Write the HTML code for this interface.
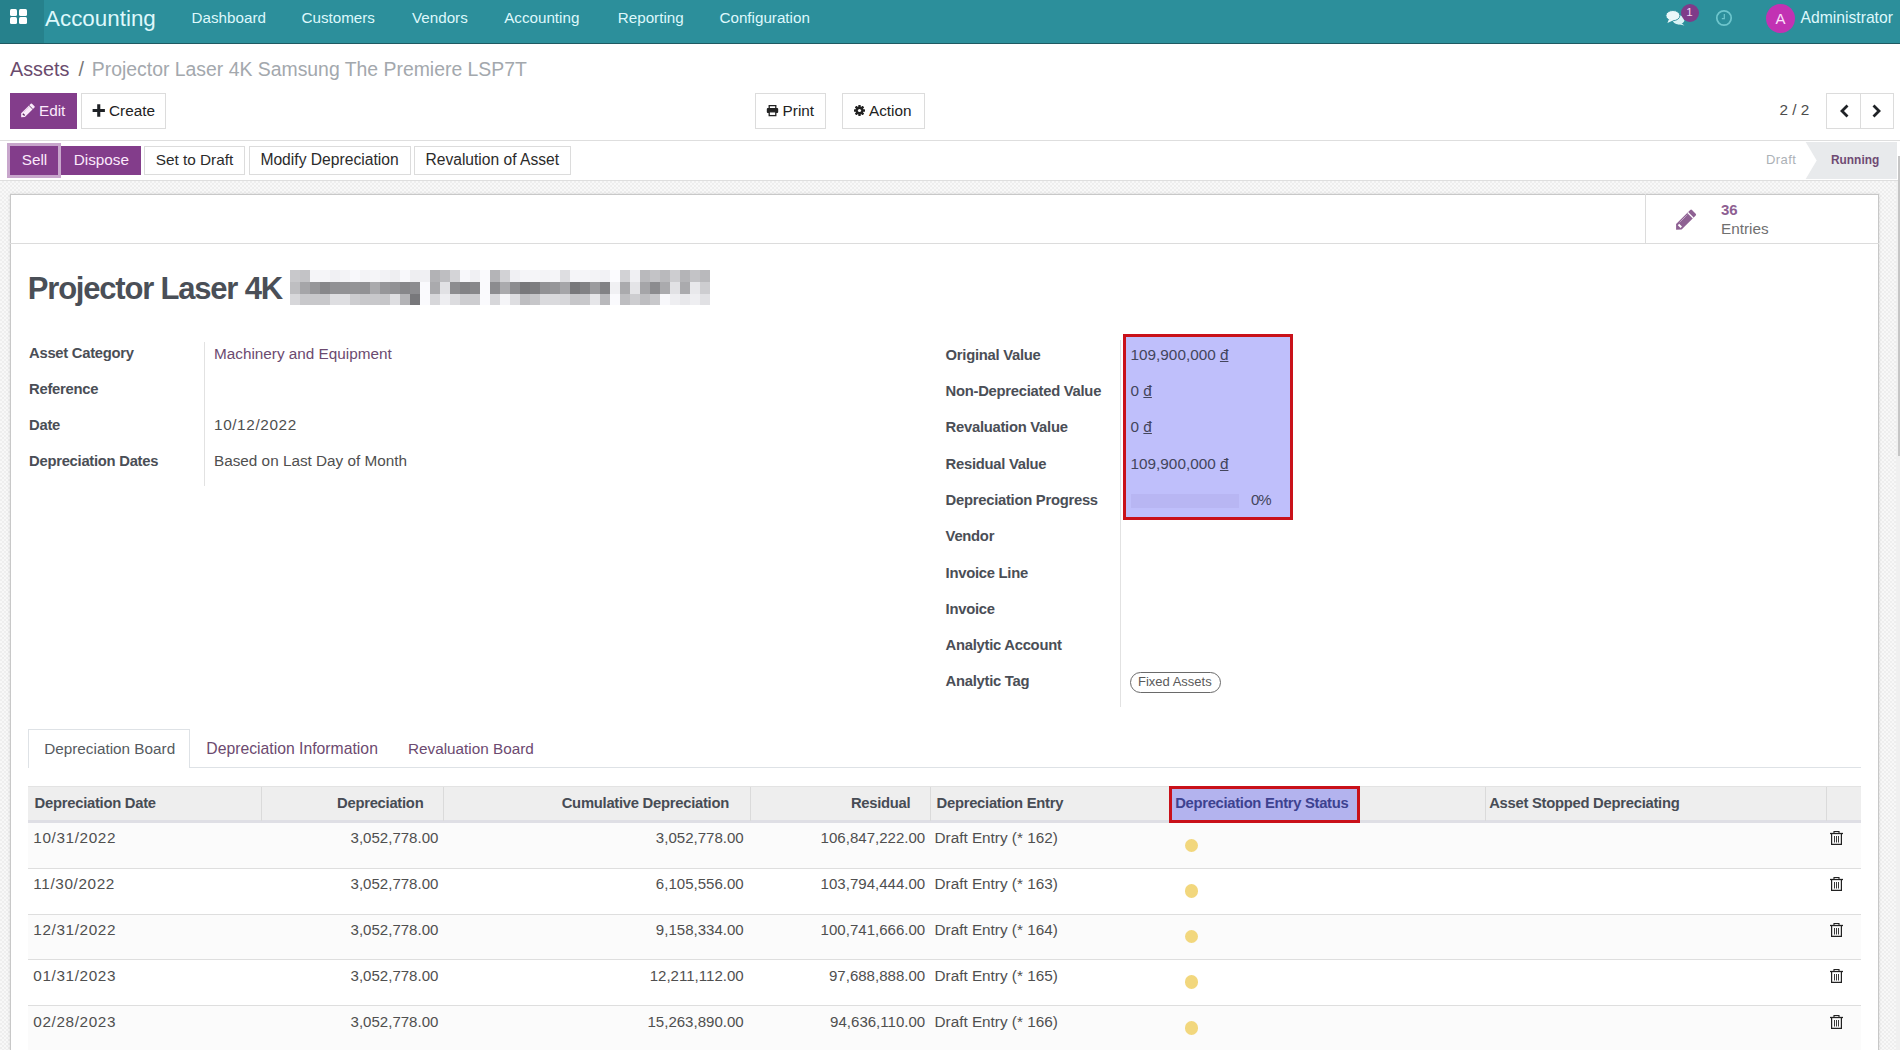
<!DOCTYPE html><html><head><meta charset="utf-8"><style>
html,body{margin:0;padding:0;width:1900px;height:1050px;overflow:hidden;background:#fff;font-family:"Liberation Sans",sans-serif;}
.t{position:absolute;white-space:pre;line-height:1;}
.r{position:absolute;box-sizing:border-box;}
svg{position:absolute;}
</style></head><body>

<div class="r" style="left:0px;top:181px;width:1900px;height:869px;background-color:#f3f3f3;background-image:repeating-conic-gradient(#eeeeee 0 25%, #f8f8f8 0 50%);background-size:4px 4px;"></div>
<div class="r" style="left:10px;top:194px;width:1869px;height:866px;background:#fff;border:1px solid #c8c8c8;box-shadow:0 0 3px rgba(0,0,0,0.12);"></div>
<div class="r" style="left:1896px;top:181px;width:4px;height:869px;background:#f0f0f0;"></div>
<div class="r" style="left:0px;top:0px;width:1900px;height:43px;background:#2c8f9b;"></div>
<div class="r" style="left:0px;top:0px;width:44px;height:43px;background:#26818c;"></div>
<div class="r" style="left:0px;top:43px;width:1900px;height:1px;background:#1f5a62;"></div>
<div class="r" style="left:9.5px;top:9px;width:7.5px;height:6.5px;background:#fff;border-radius:1.5px;"></div>
<div class="r" style="left:19px;top:9px;width:7.5px;height:6.5px;background:#fff;border-radius:1.5px;"></div>
<div class="r" style="left:9.5px;top:17px;width:7.5px;height:6.5px;background:#fff;border-radius:1.5px;"></div>
<div class="r" style="left:19px;top:17px;width:7.5px;height:6.5px;background:#fff;border-radius:1.5px;"></div>
<div class="t" style="top:8px;font-size:22.4px;font-weight:400;color:#def8fb;left:45px;">Accounting</div>
<div class="t" style="top:10px;font-size:15.2px;font-weight:400;color:#def8fb;left:191.6px;">Dashboard</div>
<div class="t" style="top:10px;font-size:15.2px;font-weight:400;color:#def8fb;left:301.5px;">Customers</div>
<div class="t" style="top:10px;font-size:15.2px;font-weight:400;color:#def8fb;left:412px;">Vendors</div>
<div class="t" style="top:10px;font-size:15.2px;font-weight:400;color:#def8fb;left:504.2px;">Accounting</div>
<div class="t" style="top:10px;font-size:15.2px;font-weight:400;color:#def8fb;left:617.8px;">Reporting</div>
<div class="t" style="top:10px;font-size:15.2px;font-weight:400;color:#def8fb;left:719.5px;">Configuration</div>
<svg style="left:1664px;top:8px" width="24" height="20" viewBox="0 0 24 20">
<ellipse cx="14.5" cy="11.8" rx="6" ry="4.6" fill="#d8f3f5"/>
<path d="M16.5 14.5 L20.4 17.4 L12.5 15.8 Z" fill="#d8f3f5"/>
<ellipse cx="8.9" cy="7.6" rx="7" ry="5.1" fill="#eaf8f9" stroke="#2c8f9b" stroke-width="0.9"/>
<path d="M5 11 L3.4 15 L9.5 12.3 Z" fill="#eaf8f9"/>
</svg>
<div class="r" style="left:1680.5px;top:4px;width:18.0px;height:18px;background:#7f3b89;border-radius:50%;"></div>
<div class="t" style="top:7px;font-size:11.5px;font-weight:400;color:#f5d8f3;left:1489.5px;width:400px;text-align:center;">1</div>
<svg style="left:1715px;top:9px" width="18" height="18" viewBox="0 0 18 18">
<circle cx="9" cy="9" r="7.2" fill="none" stroke="#6ec6cd" stroke-width="1.7"/>
<path d="M9.3 5 V9.6 H6.8" fill="none" stroke="#6ec6cd" stroke-width="1.2"/>
</svg>
<div class="r" style="left:1765.7px;top:3.8px;width:29.0px;height:28.999999999999996px;background:#c232b3;border-radius:50%;"></div>
<div class="t" style="top:11px;font-size:15px;font-weight:400;color:#fbe0fb;left:1580.5px;width:400px;text-align:center;">A</div>
<div class="t" style="top:10px;font-size:15.7px;font-weight:400;color:#def8fb;left:1800.5px;">Administrator</div>
<div class="t" style="top:60px;font-size:19.8px;font-weight:400;color:#6a4b6d;left:10px;">Assets</div>
<div class="t" style="top:60px;font-size:19.8px;font-weight:400;color:#777;left:78.5px;">/</div>
<div class="t" style="top:60px;font-size:19.4px;font-weight:400;color:#a3a8ad;left:91.8px;">Projector Laser 4K Samsung The Premiere LSP7T</div>
<div class="r" style="left:10px;top:93px;width:67px;height:36px;background:#833d8b;"></div>
<svg style="left:16.95px;top:98.8px" width="21.8" height="21.8" viewBox="0 0 32 32">
<path d="M6.1 26.8 L6.1 21.1 L20.2 7 Q21.1 6.1 22 7 L25.7 10.7 Q26.6 11.6 25.7 12.5 L11.6 26.6 Z" fill="#fbe9fb"/>
<path d="M17.7 9.5 L23.2 15" stroke="#5a2d60" stroke-width="1.3"/>
<path d="M9.8 19.2 L17.2 11.8" stroke="#b48fb8" stroke-width="0.9" stroke-dasharray="1 0.6"/>
<path d="M8.5 21.5 L11.25 24.25" stroke="#5a2d60" stroke-width="2"/>
</svg>
<div class="t" style="top:103px;font-size:15.3px;font-weight:400;color:#fbe9fb;left:39px;">Edit</div>
<div class="r" style="left:81px;top:93px;width:85px;height:36px;background:#fff;border:1px solid #dcdcdc;"></div>
<svg style="left:92px;top:103.5px" width="13" height="13" viewBox="0 0 13 13">
<path d="M6.75 0.3 V12.7 M0.6 6.5 H12.9" stroke="#1f2226" stroke-width="3.1"/>
</svg>
<div class="t" style="top:103px;font-size:15.3px;font-weight:400;color:#222;left:109px;">Create</div>
<div class="r" style="left:755px;top:93px;width:71px;height:36px;background:#fff;border:1px solid #dcdcdc;"></div>
<svg style="left:766px;top:104px" width="13" height="13" viewBox="0 0 13 13">
<path d="M3.2 4 V1.6 H9.8 V4" fill="none" stroke="#222" stroke-width="1.3"/>
<rect x="0.8" y="4" width="11.4" height="5" rx="1" fill="#222"/>
<rect x="3.2" y="7.8" width="6.6" height="3.8" fill="#fff" stroke="#222" stroke-width="1.3"/>
</svg>
<div class="t" style="top:103px;font-size:15.3px;font-weight:400;color:#222;left:782.6px;">Print</div>
<div class="r" style="left:842px;top:93px;width:83px;height:36px;background:#fff;border:1px solid #dcdcdc;"></div>
<svg style="left:854px;top:104.5px" width="12" height="12" viewBox="0 0 12 12">
<g fill="#222" transform="translate(5.5 5.5)">
<circle r="3.9"/>
<rect x="-1.2" y="-5.5" width="2.4" height="11" rx="0.5"/>
<rect x="-1.2" y="-5.5" width="2.4" height="11" rx="0.5" transform="rotate(45)"/>
<rect x="-1.2" y="-5.5" width="2.4" height="11" rx="0.5" transform="rotate(90)"/>
<rect x="-1.2" y="-5.5" width="2.4" height="11" rx="0.5" transform="rotate(135)"/>
</g>
<circle cx="5.5" cy="5.5" r="1.6" fill="#fff"/>
</svg>
<div class="t" style="top:103px;font-size:15.3px;font-weight:400;color:#222;left:869px;">Action</div>
<div class="t" style="top:102px;font-size:15.3px;font-weight:400;color:#4c4c4c;left:1779.5px;">2 / 2</div>
<div class="r" style="left:1826px;top:93px;width:68px;height:36px;background:#fff;border:1px solid #dcdcdc;"></div>
<div class="r" style="left:1860px;top:93px;width:1px;height:36px;background:#dcdcdc;"></div>
<svg style="left:1837.5px;top:103px" width="14" height="16" viewBox="0 0 14 16">
<path d="M9.5 2.5 L4 8 L9.5 13.5" fill="none" stroke="#1f2226" stroke-width="2.8" stroke-linejoin="miter"/>
</svg>
<svg style="left:1869px;top:103px" width="14" height="16" viewBox="0 0 14 16">
<path d="M4.5 2.5 L10 8 L4.5 13.5" fill="none" stroke="#1f2226" stroke-width="2.8" stroke-linejoin="miter"/>
</svg>
<div class="r" style="left:0px;top:140px;width:1900px;height:1px;background:#dedede;"></div>
<div class="r" style="left:7px;top:143px;width:54px;height:35px;background:#c8a6cc;"></div>
<div class="r" style="left:10px;top:146px;width:48px;height:29px;background:#833d8b;"></div>
<div class="r" style="left:61px;top:146px;width:80px;height:29px;background:#833d8b;"></div>
<div class="t" style="top:152px;font-size:15.3px;font-weight:400;color:#fbe9fb;left:21.7px;">Sell</div>
<div class="t" style="top:152px;font-size:15.3px;font-weight:400;color:#fbe9fb;left:73.7px;">Dispose</div>
<div class="r" style="left:144px;top:146px;width:101px;height:29px;background:#fff;border:1px solid #dcdcdc;"></div>
<div class="t" style="top:152px;font-size:15.35px;font-weight:400;color:#2b2b2b;left:155.7px;">Set to Draft</div>
<div class="r" style="left:249px;top:146px;width:162px;height:29px;background:#fff;border:1px solid #dcdcdc;"></div>
<div class="t" style="top:152px;font-size:15.65px;font-weight:400;color:#2b2b2b;left:260.4px;">Modify Depreciation</div>
<div class="r" style="left:414px;top:146px;width:157px;height:29px;background:#fff;border:1px solid #dcdcdc;"></div>
<div class="t" style="top:152px;font-size:15.6px;font-weight:400;color:#2b2b2b;left:425.5px;">Revalution of Asset</div>
<div class="t" style="top:153px;font-size:13px;font-weight:400;color:#acb1b6;letter-spacing:0.45px;left:1766px;">Draft</div>
<svg style="left:1805px;top:142px" width="92" height="37" viewBox="0 0 92 37">
<path d="M0.7 0 H92 V37 H0.7 L11.7 18.5 Z" fill="#e8eaec"/>
</svg>
<div class="t" style="top:155px;font-size:11.9px;font-weight:700;color:#6f4a73;left:1831px;">Running</div>
<div class="r" style="left:0px;top:180px;width:1900px;height:1px;background:#dedede;"></div>
<div class="r" style="left:10px;top:243px;width:1869px;height:1px;background:#dcdcdc;"></div>
<div class="r" style="left:1645px;top:194px;width:1px;height:49px;background:#dcdcdc;"></div>
<svg style="left:1670px;top:203px" width="32.0" height="32.0" viewBox="0 0 32 32">
<path d="M6.1 26.8 L6.1 21.1 L20.2 7 Q21.1 6.1 22 7 L25.7 10.7 Q26.6 11.6 25.7 12.5 L11.6 26.6 Z" fill="#8e6193"/>
<path d="M17.7 9.5 L23.2 15" stroke="#ffffff" stroke-width="1.3"/>
<path d="M9.8 19.2 L17.2 11.8" stroke="#e3cfe6" stroke-width="0.9" stroke-dasharray="1 0.6"/>
<path d="M8.5 21.5 L11.25 24.25" stroke="#ffffff" stroke-width="2"/>
</svg>
<div class="t" style="top:202px;font-size:15px;font-weight:700;color:#8e5f92;left:1721px;">36</div>
<div class="t" style="top:221px;font-size:15.3px;font-weight:400;color:#707070;left:1721px;">Entries</div>
<div class="t" style="top:273px;font-size:31px;font-weight:700;color:#4a4f57;letter-spacing:-1.2px;left:27.8px;">Projector Laser 4K</div>
<svg style="left:290px;top:270px" width="420" height="35" shape-rendering="crispEdges"><rect x="0" y="0" width="10" height="12" fill="rgb(200,200,203)"/><rect x="10" y="0" width="10" height="12" fill="rgb(195,195,198)"/><rect x="20" y="0" width="10" height="12" fill="rgb(245,245,248)"/><rect x="30" y="0" width="10" height="12" fill="rgb(245,245,248)"/><rect x="40" y="0" width="10" height="12" fill="rgb(240,240,243)"/><rect x="50" y="0" width="10" height="12" fill="rgb(243,243,246)"/><rect x="60" y="0" width="10" height="12" fill="rgb(248,248,251)"/><rect x="70" y="0" width="10" height="12" fill="rgb(243,243,246)"/><rect x="80" y="0" width="10" height="12" fill="rgb(245,245,248)"/><rect x="90" y="0" width="10" height="12" fill="rgb(242,242,245)"/><rect x="100" y="0" width="10" height="12" fill="rgb(238,238,241)"/><rect x="110" y="0" width="10" height="12" fill="rgb(248,248,251)"/><rect x="120" y="0" width="10" height="12" fill="rgb(238,238,241)"/><rect x="130" y="0" width="10" height="12" fill="rgb(240,240,243)"/><rect x="140" y="0" width="10" height="12" fill="rgb(178,178,181)"/><rect x="150" y="0" width="10" height="12" fill="rgb(190,190,193)"/><rect x="160" y="0" width="10" height="12" fill="rgb(212,212,215)"/><rect x="170" y="0" width="10" height="12" fill="rgb(248,248,251)"/><rect x="180" y="0" width="10" height="12" fill="rgb(240,240,243)"/><rect x="190" y="0" width="10" height="12" fill="rgb(250,250,253)"/><rect x="200" y="0" width="10" height="12" fill="rgb(180,180,183)"/><rect x="210" y="0" width="10" height="12" fill="rgb(210,210,213)"/><rect x="220" y="0" width="10" height="12" fill="rgb(240,240,243)"/><rect x="230" y="0" width="10" height="12" fill="rgb(245,245,248)"/><rect x="240" y="0" width="10" height="12" fill="rgb(245,245,248)"/><rect x="250" y="0" width="10" height="12" fill="rgb(243,243,246)"/><rect x="260" y="0" width="10" height="12" fill="rgb(245,245,248)"/><rect x="270" y="0" width="10" height="12" fill="rgb(222,222,225)"/><rect x="280" y="0" width="10" height="12" fill="rgb(245,245,248)"/><rect x="290" y="0" width="10" height="12" fill="rgb(245,245,248)"/><rect x="300" y="0" width="10" height="12" fill="rgb(243,243,246)"/><rect x="310" y="0" width="10" height="12" fill="rgb(242,242,245)"/><rect x="320" y="0" width="10" height="12" fill="rgb(252,252,255)"/><rect x="330" y="0" width="10" height="12" fill="rgb(210,210,213)"/><rect x="340" y="0" width="10" height="12" fill="rgb(240,240,243)"/><rect x="350" y="0" width="10" height="12" fill="rgb(185,185,188)"/><rect x="360" y="0" width="10" height="12" fill="rgb(195,195,198)"/><rect x="370" y="0" width="10" height="12" fill="rgb(185,185,188)"/><rect x="380" y="0" width="10" height="12" fill="rgb(205,205,208)"/><rect x="390" y="0" width="10" height="12" fill="rgb(180,180,183)"/><rect x="400" y="0" width="10" height="12" fill="rgb(195,195,198)"/><rect x="410" y="0" width="10" height="12" fill="rgb(185,185,188)"/><rect x="0" y="12" width="10" height="12" fill="rgb(190,190,193)"/><rect x="10" y="12" width="10" height="12" fill="rgb(165,165,168)"/><rect x="20" y="12" width="10" height="12" fill="rgb(150,150,153)"/><rect x="30" y="12" width="10" height="12" fill="rgb(135,135,138)"/><rect x="40" y="12" width="10" height="12" fill="rgb(145,145,148)"/><rect x="50" y="12" width="10" height="12" fill="rgb(145,145,148)"/><rect x="60" y="12" width="10" height="12" fill="rgb(148,148,151)"/><rect x="70" y="12" width="10" height="12" fill="rgb(145,145,148)"/><rect x="80" y="12" width="10" height="12" fill="rgb(170,170,173)"/><rect x="90" y="12" width="10" height="12" fill="rgb(150,150,153)"/><rect x="100" y="12" width="10" height="12" fill="rgb(145,145,148)"/><rect x="110" y="12" width="10" height="12" fill="rgb(135,135,138)"/><rect x="120" y="12" width="10" height="12" fill="rgb(140,140,143)"/><rect x="130" y="12" width="10" height="12" fill="rgb(250,250,253)"/><rect x="140" y="12" width="10" height="12" fill="rgb(170,170,173)"/><rect x="150" y="12" width="10" height="12" fill="rgb(225,225,228)"/><rect x="160" y="12" width="10" height="12" fill="rgb(140,140,143)"/><rect x="170" y="12" width="10" height="12" fill="rgb(130,130,133)"/><rect x="180" y="12" width="10" height="12" fill="rgb(135,135,138)"/><rect x="190" y="12" width="10" height="12" fill="rgb(250,250,253)"/><rect x="200" y="12" width="10" height="12" fill="rgb(140,140,143)"/><rect x="210" y="12" width="10" height="12" fill="rgb(170,170,173)"/><rect x="220" y="12" width="10" height="12" fill="rgb(140,140,143)"/><rect x="230" y="12" width="10" height="12" fill="rgb(120,120,123)"/><rect x="240" y="12" width="10" height="12" fill="rgb(125,125,128)"/><rect x="250" y="12" width="10" height="12" fill="rgb(145,145,148)"/><rect x="260" y="12" width="10" height="12" fill="rgb(150,150,153)"/><rect x="270" y="12" width="10" height="12" fill="rgb(165,165,168)"/><rect x="280" y="12" width="10" height="12" fill="rgb(120,120,123)"/><rect x="290" y="12" width="10" height="12" fill="rgb(130,130,133)"/><rect x="300" y="12" width="10" height="12" fill="rgb(155,155,158)"/><rect x="310" y="12" width="10" height="12" fill="rgb(130,130,133)"/><rect x="320" y="12" width="10" height="12" fill="rgb(240,240,243)"/><rect x="330" y="12" width="10" height="12" fill="rgb(170,170,173)"/><rect x="340" y="12" width="10" height="12" fill="rgb(228,228,231)"/><rect x="350" y="12" width="10" height="12" fill="rgb(165,165,168)"/><rect x="360" y="12" width="10" height="12" fill="rgb(140,140,143)"/><rect x="370" y="12" width="10" height="12" fill="rgb(170,170,173)"/><rect x="380" y="12" width="10" height="12" fill="rgb(225,225,228)"/><rect x="390" y="12" width="10" height="12" fill="rgb(170,170,173)"/><rect x="400" y="12" width="10" height="12" fill="rgb(232,232,235)"/><rect x="410" y="12" width="10" height="12" fill="rgb(205,205,208)"/><rect x="0" y="24" width="10" height="11" fill="rgb(215,215,218)"/><rect x="10" y="24" width="10" height="11" fill="rgb(200,200,203)"/><rect x="20" y="24" width="10" height="11" fill="rgb(200,200,203)"/><rect x="30" y="24" width="10" height="11" fill="rgb(200,200,203)"/><rect x="40" y="24" width="10" height="11" fill="rgb(222,222,225)"/><rect x="50" y="24" width="10" height="11" fill="rgb(222,222,225)"/><rect x="60" y="24" width="10" height="11" fill="rgb(205,205,208)"/><rect x="70" y="24" width="10" height="11" fill="rgb(200,200,203)"/><rect x="80" y="24" width="10" height="11" fill="rgb(200,200,203)"/><rect x="90" y="24" width="10" height="11" fill="rgb(198,198,201)"/><rect x="100" y="24" width="10" height="11" fill="rgb(222,222,225)"/><rect x="110" y="24" width="10" height="11" fill="rgb(180,180,183)"/><rect x="120" y="24" width="10" height="11" fill="rgb(120,120,123)"/><rect x="130" y="24" width="10" height="11" fill="rgb(250,250,253)"/><rect x="140" y="24" width="10" height="11" fill="rgb(215,215,218)"/><rect x="150" y="24" width="10" height="11" fill="rgb(238,238,241)"/><rect x="160" y="24" width="10" height="11" fill="rgb(220,220,223)"/><rect x="170" y="24" width="10" height="11" fill="rgb(205,205,208)"/><rect x="180" y="24" width="10" height="11" fill="rgb(205,205,208)"/><rect x="190" y="24" width="10" height="11" fill="rgb(250,250,253)"/><rect x="200" y="24" width="10" height="11" fill="rgb(215,215,218)"/><rect x="210" y="24" width="10" height="11" fill="rgb(245,245,248)"/><rect x="220" y="24" width="10" height="11" fill="rgb(222,222,225)"/><rect x="230" y="24" width="10" height="11" fill="rgb(190,190,193)"/><rect x="240" y="24" width="10" height="11" fill="rgb(198,198,201)"/><rect x="250" y="24" width="10" height="11" fill="rgb(218,218,221)"/><rect x="260" y="24" width="10" height="11" fill="rgb(218,218,221)"/><rect x="270" y="24" width="10" height="11" fill="rgb(215,215,218)"/><rect x="280" y="24" width="10" height="11" fill="rgb(198,198,201)"/><rect x="290" y="24" width="10" height="11" fill="rgb(200,200,203)"/><rect x="300" y="24" width="10" height="11" fill="rgb(230,230,233)"/><rect x="310" y="24" width="10" height="11" fill="rgb(185,185,188)"/><rect x="320" y="24" width="10" height="11" fill="rgb(250,250,253)"/><rect x="330" y="24" width="10" height="11" fill="rgb(190,190,193)"/><rect x="340" y="24" width="10" height="11" fill="rgb(205,205,208)"/><rect x="350" y="24" width="10" height="11" fill="rgb(190,190,193)"/><rect x="360" y="24" width="10" height="11" fill="rgb(200,200,203)"/><rect x="370" y="24" width="10" height="11" fill="rgb(248,248,251)"/><rect x="380" y="24" width="10" height="11" fill="rgb(238,238,241)"/><rect x="390" y="24" width="10" height="11" fill="rgb(232,232,235)"/><rect x="400" y="24" width="10" height="11" fill="rgb(238,238,241)"/><rect x="410" y="24" width="10" height="11" fill="rgb(225,225,228)"/></svg>
<div class="r" style="left:204px;top:342px;width:1px;height:144px;background:#e2e2e2;"></div>
<div class="t" style="top:346px;font-size:14.8px;font-weight:700;color:#4a4e56;letter-spacing:-0.27px;left:29px;">Asset Category</div>
<div class="t" style="top:382px;font-size:14.8px;font-weight:700;color:#4a4e56;letter-spacing:-0.27px;left:29px;">Reference</div>
<div class="t" style="top:418px;font-size:14.8px;font-weight:700;color:#4a4e56;letter-spacing:-0.27px;left:29px;">Date</div>
<div class="t" style="top:454px;font-size:14.8px;font-weight:700;color:#4a4e56;letter-spacing:-0.27px;left:29px;">Depreciation Dates</div>
<div class="t" style="top:346px;font-size:15.3px;font-weight:400;color:#6c4a70;left:214px;">Machinery and Equipment</div>
<div class="t" style="top:417px;font-size:15.3px;font-weight:400;color:#4f4f4f;letter-spacing:0.62px;left:214px;">10/12/2022</div>
<div class="t" style="top:453px;font-size:15.3px;font-weight:400;color:#4f4f4f;left:214px;">Based on Last Day of Month</div>
<div class="r" style="left:1120px;top:340px;width:1px;height:367px;background:#e2e2e2;"></div>
<div class="t" style="top:348px;font-size:14.8px;font-weight:700;color:#4a4e56;letter-spacing:-0.27px;left:945.6px;">Original Value</div>
<div class="t" style="top:384px;font-size:14.8px;font-weight:700;color:#4a4e56;letter-spacing:-0.27px;left:945.6px;">Non-Depreciated Value</div>
<div class="t" style="top:420px;font-size:14.8px;font-weight:700;color:#4a4e56;letter-spacing:-0.27px;left:945.6px;">Revaluation Value</div>
<div class="t" style="top:457px;font-size:14.8px;font-weight:700;color:#4a4e56;letter-spacing:-0.27px;left:945.6px;">Residual Value</div>
<div class="t" style="top:493px;font-size:14.8px;font-weight:700;color:#4a4e56;letter-spacing:-0.27px;left:945.6px;">Depreciation Progress</div>
<div class="t" style="top:529px;font-size:14.8px;font-weight:700;color:#4a4e56;letter-spacing:-0.27px;left:945.6px;">Vendor</div>
<div class="t" style="top:566px;font-size:14.8px;font-weight:700;color:#4a4e56;letter-spacing:-0.27px;left:945.6px;">Invoice Line</div>
<div class="t" style="top:602px;font-size:14.8px;font-weight:700;color:#4a4e56;letter-spacing:-0.27px;left:945.6px;">Invoice</div>
<div class="t" style="top:638px;font-size:14.8px;font-weight:700;color:#4a4e56;letter-spacing:-0.27px;left:945.6px;">Analytic Account</div>
<div class="t" style="top:674px;font-size:14.8px;font-weight:700;color:#4a4e56;letter-spacing:-0.27px;left:945.6px;">Analytic Tag</div>
<div class="r" style="left:1123px;top:334px;width:170px;height:185.5px;background:#bfbffb;border:3px solid #c9111a;"></div>
<div class="t" style="top:347px;font-size:15.3px;font-weight:400;color:#43455c;left:1130.6px;">109,900,000 <u>đ</u></div>
<div class="t" style="top:383px;font-size:15.3px;font-weight:400;color:#43455c;left:1130.6px;">0 <u>đ</u></div>
<div class="t" style="top:419px;font-size:15.3px;font-weight:400;color:#43455c;left:1130.6px;">0 <u>đ</u></div>
<div class="t" style="top:456px;font-size:15.3px;font-weight:400;color:#43455c;left:1130.6px;">109,900,000 <u>đ</u></div>
<div class="r" style="left:1131px;top:494px;width:108px;height:13.5px;background:#b8b6f3;"></div>
<div class="t" style="top:492px;font-size:15px;font-weight:400;color:#43455c;letter-spacing:-1.1px;left:1251px;">0%</div>
<div class="r" style="left:1130px;top:672px;width:91px;height:21px;border:1px solid #6a6a6a;border-radius:11px;"></div>
<div class="t" style="top:675px;font-size:13px;font-weight:400;color:#5a5a5a;left:1138px;">Fixed Assets</div>
<div class="r" style="left:28px;top:767px;width:1833px;height:1px;background:#dee2e6;"></div>
<div class="r" style="left:28px;top:729px;width:162px;height:39px;background:#fff;border:1px solid #dee2e6;border-bottom:none;"></div>
<div class="t" style="top:741px;font-size:15.3px;font-weight:400;color:#555a60;left:44.2px;">Depreciation Board</div>
<div class="t" style="top:741px;font-size:15.75px;font-weight:400;color:#6c4a70;left:206.3px;">Depreciation Information</div>
<div class="t" style="top:741px;font-size:15.3px;font-weight:400;color:#6c4a70;left:408px;">Revaluation Board</div>
<div class="r" style="left:28px;top:786px;width:1833px;height:34px;background:#eeeeee;border-top:1px solid #e3e3e3;"></div>
<div class="r" style="left:28px;top:820px;width:1833px;height:3px;background:#dfdfe5;"></div>
<div class="r" style="left:261px;top:787px;width:1px;height:34px;background:#dadada;"></div>
<div class="r" style="left:443px;top:787px;width:1px;height:34px;background:#dadada;"></div>
<div class="r" style="left:749.5px;top:787px;width:1.0px;height:34px;background:#dadada;"></div>
<div class="r" style="left:930px;top:787px;width:1px;height:34px;background:#dadada;"></div>
<div class="r" style="left:1170px;top:787px;width:1px;height:34px;background:#dadada;"></div>
<div class="r" style="left:1484.5px;top:787px;width:1.0px;height:34px;background:#dadada;"></div>
<div class="r" style="left:1826px;top:787px;width:1px;height:34px;background:#dadada;"></div>
<div class="t" style="top:796px;font-size:14.8px;font-weight:700;color:#474c55;letter-spacing:-0.27px;left:34.6px;">Depreciation Date</div>
<div class="t" style="top:796px;font-size:14.8px;font-weight:700;color:#474c55;letter-spacing:-0.27px;right:1476.6px;">Depreciation</div>
<div class="t" style="top:796px;font-size:14.8px;font-weight:700;color:#474c55;letter-spacing:-0.27px;right:1171px;">Cumulative Depreciation</div>
<div class="t" style="top:796px;font-size:14.8px;font-weight:700;color:#474c55;letter-spacing:-0.27px;right:989.6px;">Residual</div>
<div class="t" style="top:796px;font-size:14.8px;font-weight:700;color:#474c55;letter-spacing:-0.27px;left:936.5px;">Depreciation Entry</div>
<div class="t" style="top:796px;font-size:14.8px;font-weight:700;color:#474c55;letter-spacing:-0.27px;left:1489.2px;">Asset Stopped Depreciating</div>
<div class="r" style="left:1169px;top:785.5px;width:191px;height:37.0px;background:#b3b3ee;border:3px solid #c9111a;"></div>
<div class="t" style="top:796px;font-size:14.8px;font-weight:700;color:#3d4290;letter-spacing:-0.31px;left:1175.2px;">Depreciation Entry Status</div>
<div class="r" style="left:28px;top:823px;width:1833px;height:45.5px;background:#fbfbfb;"></div>
<div class="r" style="left:28px;top:868.0px;width:1833px;height:1.0px;background:#dedede;"></div>
<div class="t" style="top:830px;font-size:15.3px;font-weight:400;color:#4f4f4f;letter-spacing:0.62px;left:33.3px;">10/31/2022</div>
<div class="t" style="top:830px;font-size:15.05px;font-weight:400;color:#4f4f4f;right:1461.6px;">3,052,778.00</div>
<div class="t" style="top:830px;font-size:15.05px;font-weight:400;color:#4f4f4f;right:1156.3px;">3,052,778.00</div>
<div class="t" style="top:830px;font-size:15.05px;font-weight:400;color:#4f4f4f;right:974.8px;">106,847,222.00</div>
<div class="t" style="top:830px;font-size:15.3px;font-weight:400;color:#4f4f4f;left:934.5px;">Draft Entry (* 162)</div>
<div class="r" style="left:1185px;top:838.5999999999999px;width:13.400000000000091px;height:13.400000000000091px;background:#f2d77d;border-radius:50%;"></div>
<svg style="left:1829px;top:830px" width="15" height="16" viewBox="0 0 15 16">
<path d="M5 3 V1.5 H10 V3" fill="none" stroke="#222" stroke-width="1.1"/>
<path d="M1 3.5 H14" stroke="#222" stroke-width="1.3"/>
<path d="M2.6 4 V14.4 H12.4 V4" fill="none" stroke="#222" stroke-width="1.2"/>
<path d="M5.5 6 V12.5 M7.5 6 V12.5 M9.5 6 V12.5" stroke="#222" stroke-width="0.9"/>
</svg>
<div class="r" style="left:28px;top:868.5px;width:1833px;height:46.0px;background:#ffffff;"></div>
<div class="r" style="left:28px;top:914.0px;width:1833px;height:1.0px;background:#dedede;"></div>
<div class="t" style="top:876px;font-size:15.3px;font-weight:400;color:#4f4f4f;letter-spacing:0.62px;left:33.3px;">11/30/2022</div>
<div class="t" style="top:876px;font-size:15.05px;font-weight:400;color:#4f4f4f;right:1461.6px;">3,052,778.00</div>
<div class="t" style="top:876px;font-size:15.05px;font-weight:400;color:#4f4f4f;right:1156.3px;">6,105,556.00</div>
<div class="t" style="top:876px;font-size:15.05px;font-weight:400;color:#4f4f4f;right:974.8px;">103,794,444.00</div>
<div class="t" style="top:876px;font-size:15.3px;font-weight:400;color:#4f4f4f;left:934.5px;">Draft Entry (* 163)</div>
<div class="r" style="left:1185px;top:884.3px;width:13.400000000000091px;height:13.400000000000091px;background:#f2d77d;border-radius:50%;"></div>
<svg style="left:1829px;top:876px" width="15" height="16" viewBox="0 0 15 16">
<path d="M5 3 V1.5 H10 V3" fill="none" stroke="#222" stroke-width="1.1"/>
<path d="M1 3.5 H14" stroke="#222" stroke-width="1.3"/>
<path d="M2.6 4 V14.4 H12.4 V4" fill="none" stroke="#222" stroke-width="1.2"/>
<path d="M5.5 6 V12.5 M7.5 6 V12.5 M9.5 6 V12.5" stroke="#222" stroke-width="0.9"/>
</svg>
<div class="r" style="left:28px;top:914.5px;width:1833px;height:45.0px;background:#fbfbfb;"></div>
<div class="r" style="left:28px;top:959.0px;width:1833px;height:1.0px;background:#dedede;"></div>
<div class="t" style="top:922px;font-size:15.3px;font-weight:400;color:#4f4f4f;letter-spacing:0.62px;left:33.3px;">12/31/2022</div>
<div class="t" style="top:922px;font-size:15.05px;font-weight:400;color:#4f4f4f;right:1461.6px;">3,052,778.00</div>
<div class="t" style="top:922px;font-size:15.05px;font-weight:400;color:#4f4f4f;right:1156.3px;">9,158,334.00</div>
<div class="t" style="top:922px;font-size:15.05px;font-weight:400;color:#4f4f4f;right:974.8px;">100,741,666.00</div>
<div class="t" style="top:922px;font-size:15.3px;font-weight:400;color:#4f4f4f;left:934.5px;">Draft Entry (* 164)</div>
<div class="r" style="left:1185px;top:929.5999999999999px;width:13.400000000000091px;height:13.400000000000091px;background:#f2d77d;border-radius:50%;"></div>
<svg style="left:1829px;top:922px" width="15" height="16" viewBox="0 0 15 16">
<path d="M5 3 V1.5 H10 V3" fill="none" stroke="#222" stroke-width="1.1"/>
<path d="M1 3.5 H14" stroke="#222" stroke-width="1.3"/>
<path d="M2.6 4 V14.4 H12.4 V4" fill="none" stroke="#222" stroke-width="1.2"/>
<path d="M5.5 6 V12.5 M7.5 6 V12.5 M9.5 6 V12.5" stroke="#222" stroke-width="0.9"/>
</svg>
<div class="r" style="left:28px;top:959.5px;width:1833px;height:46.0px;background:#ffffff;"></div>
<div class="r" style="left:28px;top:1005.0px;width:1833px;height:1.0px;background:#dedede;"></div>
<div class="t" style="top:968px;font-size:15.3px;font-weight:400;color:#4f4f4f;letter-spacing:0.62px;left:33.3px;">01/31/2023</div>
<div class="t" style="top:968px;font-size:15.05px;font-weight:400;color:#4f4f4f;right:1461.6px;">3,052,778.00</div>
<div class="t" style="top:968px;font-size:15.05px;font-weight:400;color:#4f4f4f;right:1156.3px;">12,211,112.00</div>
<div class="t" style="top:968px;font-size:15.05px;font-weight:400;color:#4f4f4f;right:974.8px;">97,688,888.00</div>
<div class="t" style="top:968px;font-size:15.3px;font-weight:400;color:#4f4f4f;left:934.5px;">Draft Entry (* 165)</div>
<div class="r" style="left:1185px;top:975.3px;width:13.400000000000091px;height:13.400000000000091px;background:#f2d77d;border-radius:50%;"></div>
<svg style="left:1829px;top:968px" width="15" height="16" viewBox="0 0 15 16">
<path d="M5 3 V1.5 H10 V3" fill="none" stroke="#222" stroke-width="1.1"/>
<path d="M1 3.5 H14" stroke="#222" stroke-width="1.3"/>
<path d="M2.6 4 V14.4 H12.4 V4" fill="none" stroke="#222" stroke-width="1.2"/>
<path d="M5.5 6 V12.5 M7.5 6 V12.5 M9.5 6 V12.5" stroke="#222" stroke-width="0.9"/>
</svg>
<div class="r" style="left:28px;top:1005.5px;width:1833px;height:45.5px;background:#fbfbfb;"></div>
<div class="t" style="top:1014px;font-size:15.3px;font-weight:400;color:#4f4f4f;letter-spacing:0.62px;left:33.3px;">02/28/2023</div>
<div class="t" style="top:1014px;font-size:15.05px;font-weight:400;color:#4f4f4f;right:1461.6px;">3,052,778.00</div>
<div class="t" style="top:1014px;font-size:15.05px;font-weight:400;color:#4f4f4f;right:1156.3px;">15,263,890.00</div>
<div class="t" style="top:1014px;font-size:15.05px;font-weight:400;color:#4f4f4f;right:974.8px;">94,636,110.00</div>
<div class="t" style="top:1014px;font-size:15.3px;font-weight:400;color:#4f4f4f;left:934.5px;">Draft Entry (* 166)</div>
<div class="r" style="left:1185px;top:1021.3px;width:13.400000000000091px;height:13.400000000000091px;background:#f2d77d;border-radius:50%;"></div>
<svg style="left:1829px;top:1014px" width="15" height="16" viewBox="0 0 15 16">
<path d="M5 3 V1.5 H10 V3" fill="none" stroke="#222" stroke-width="1.1"/>
<path d="M1 3.5 H14" stroke="#222" stroke-width="1.3"/>
<path d="M2.6 4 V14.4 H12.4 V4" fill="none" stroke="#222" stroke-width="1.2"/>
<path d="M5.5 6 V12.5 M7.5 6 V12.5 M9.5 6 V12.5" stroke="#222" stroke-width="0.9"/>
</svg>
<div class="r" style="left:1898px;top:156px;width:2px;height:300px;background:#c6c6c6;"></div>
</body></html>
